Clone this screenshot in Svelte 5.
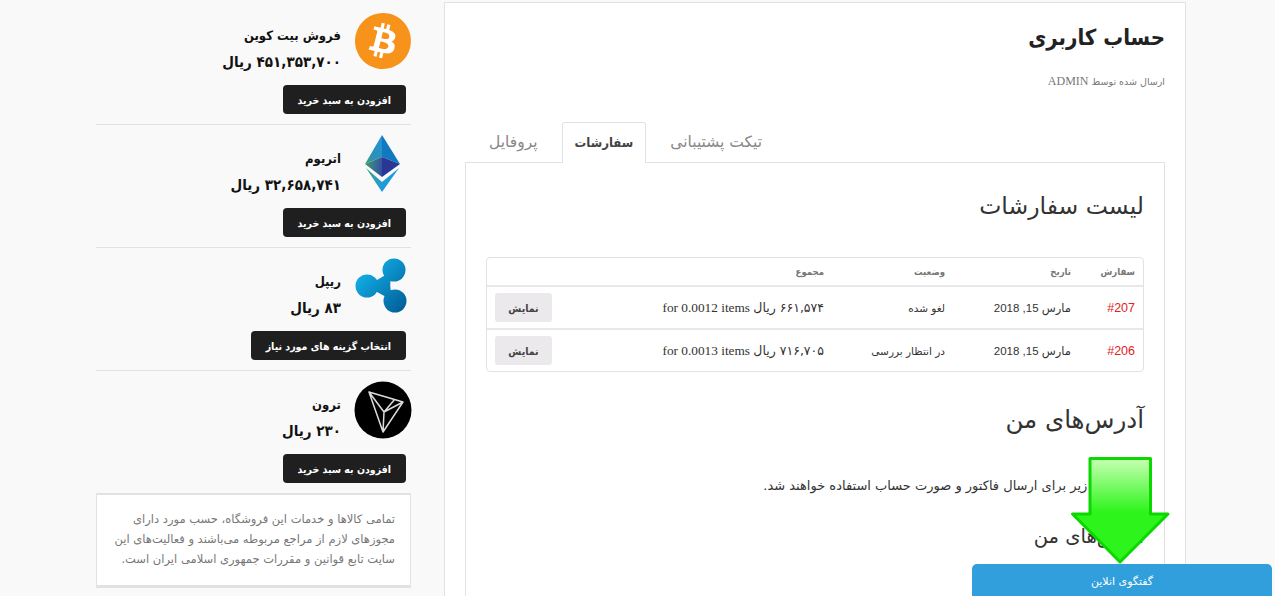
<script>
	const coins = [
		{ id: 'btc', name: 'فروش بیت کوین', price: '۴۵۱,۳۵۳,۷۰۰ ریال', action: 'افزودن به سبد خرید' },
		{ id: 'eth', name: 'اتریوم', price: '۳۲,۶۵۸,۷۴۱ ریال', action: 'افزودن به سبد خرید' },
		{ id: 'xrp', name: 'ریپل', price: '۸۳ ریال', action: 'انتخاب گزینه های مورد نیاز' },
		{ id: 'trx', name: 'ترون', price: '۲۳۰ ریال', action: 'افزودن به سبد خرید' }
	];

	const orders = [
		{ id: '#207', date: 'مارس 15, 2018', status: 'لغو شده', amount: '۶۶۱,۵۷۴ ریال', items: 'for 0.0012 items' },
		{ id: '#206', date: 'مارس 15, 2018', status: 'در انتظار بررسی', amount: '۷۱۶,۷۰۵ ریال', items: 'for 0.0013 items' }
	];
</script>

<div class="page">
	<aside class="sidebar">
		{#each coins as coin}
			<section class="coin">
				<div class="coin-head">
					<svg class="coin-icon" viewBox="0 0 56 56" aria-hidden="true">
						{#if coin.id === 'btc'}
							<circle cx="28" cy="28" r="20" fill="#fff" />
							<g transform="scale(2.3333)">
								<path fill="#f7931a" d="M23.638 14.904c-1.602 6.43-8.113 10.34-14.542 8.736C2.67 22.05-1.244 15.525.362 9.105 1.962 2.67 8.475-1.243 14.9.358c6.43 1.605 10.342 8.115 8.738 14.548v-.002zm-6.35-4.613c.24-1.59-.974-2.45-2.64-3.03l.54-2.153-1.315-.33-.525 2.107c-.345-.087-.705-.167-1.064-.25l.526-2.127-1.32-.33-.54 2.165c-.285-.067-.565-.132-.84-.2l-1.815-.45-.35 1.407s.975.225.955.236c.535.136.63.486.615.766l-1.477 5.92c-.075.166-.24.406-.614.314.015.02-.96-.24-.96-.24l-.66 1.51 1.71.426.93.242-.54 2.19 1.32.327.54-2.17c.36.1.705.19 1.05.273l-.51 2.154 1.32.33.545-2.19c2.24.427 3.93.257 4.64-1.774.57-1.637-.03-2.58-1.217-3.196.854-.193 1.5-.76 1.68-1.93h.01zm-3.01 4.22c-.404 1.64-3.157.75-4.05.53l.72-2.9c.896.23 3.757.67 3.33 2.37zm.41-4.24c-.37 1.49-2.662.735-3.405.55l.654-2.64c.744.18 3.137.524 2.75 2.084v.006z" />
							</g>
						{:else if coin.id === 'eth'}
							<defs>
								<linearGradient id="eth-left" gradientUnits="userSpaceOnUse" x1="27" y1="0" x2="10" y2="28">
									<stop offset="0" stop-color="#1c96d8" />
									<stop offset="0.7" stop-color="#2f8fb8" />
									<stop offset="1" stop-color="#3fa565" />
								</linearGradient>
								<linearGradient id="eth-mid" gradientUnits="userSpaceOnUse" x1="10" y1="28" x2="27" y2="30">
									<stop offset="0" stop-color="#3f9c72" />
									<stop offset="1" stop-color="#3252a0" />
								</linearGradient>
								<linearGradient id="eth-low" gradientUnits="userSpaceOnUse" x1="11" y1="32" x2="27" y2="50">
									<stop offset="0" stop-color="#3fa47c" />
									<stop offset="1" stop-color="#229bd6" />
								</linearGradient>
							</defs>
							<polygon points="27,-1 10,28 27,21" fill="url(#eth-left)" />
							<polygon points="27,-1 45,28 27,21" fill="#1079bf" />
							<polygon points="10,28 27,21 27,41" fill="url(#eth-mid)" />
							<polygon points="45,28 27,21 27,41" fill="#2b3795" />
							<polygon points="11,32 27,46 27,56" fill="url(#eth-low)" />
							<polygon points="44,32 27,46 27,56" fill="#1f9ad8" />
						{:else if coin.id === 'xrp'}
							<defs>
								<linearGradient id="xrp-fill" gradientUnits="userSpaceOnUse" x1="6" y1="8" x2="50" y2="50">
									<stop offset="0" stop-color="#12b2ea" />
									<stop offset="1" stop-color="#015e98" />
								</linearGradient>
							</defs>
							<g fill="url(#xrp-fill)">
								<circle cx="39" cy="11" r="11.500" />
								<circle cx="12" cy="27" r="11.500" />
								<circle cx="40" cy="42" r="11.500" />
								<path d="M39 11Q31 27 40 42Q28 37 12 27Q27 18 39 11Z" />
							</g>
						{:else}
							<circle cx="28" cy="28" r="28.500" fill="#000" />
							<path d="M14 10 48 20 28 50ZM14 10 29 30 28 50M29 30 48 20M29 30 40 17" fill="none" stroke="#dcdcdc" stroke-width="1.500" stroke-linejoin="round" />
						{/if}
					</svg>
					<div class="coin-text">
						<h3>{coin.name}</h3>
						<p>{coin.price}</p>
					</div>
				</div>
				<button class="buy">{coin.action}</button>
			</section>
		{/each}
		<div class="notice">
			تمامی کالاها و خدمات این فروشگاه، حسب مورد دارای مجوزهای لازم از مراجع مربوطه می‌باشند و فعالیت‌های این سایت تابع قوانین و مقررات جمهوری اسلامی ایران است.
		</div>
	</aside>

	<main class="content">
		<h1>حساب کاربری</h1>
		<div class="meta">ارسال شده توسط <span class="serif">ADMIN</span></div>

		<nav class="tabs">
			<span class="tab">تیکت پشتیبانی</span>
			<span class="tab active">سفارشات</span>
			<span class="tab">پروفایل</span>
		</nav>

		<div class="panel">
			<h2>لیست سفارشات</h2>
			<table>
				<colgroup>
					<col class="col-order" />
					<col class="col-date" />
					<col class="col-status" />
					<col />
					<col class="col-action" />
				</colgroup>
				<thead>
					<tr>
						<th>سفارش</th>
						<th>تاریخ</th>
						<th>وضعیت</th>
						<th>مجموع</th>
						<th></th>
					</tr>
				</thead>
				<tbody>
					{#each orders as order}
						<tr>
							<td class="order-id">{order.id}</td>
							<td class="date">{order.date}</td>
							<td>{order.status}</td>
							<td><span class="amount">{order.amount}</span> <span class="serif">{order.items}</span></td>
							<td><button class="view">نمایش</button></td>
						</tr>
					{/each}
				</tbody>
			</table>

			<h2 class="addr-title">آدرس‌های من</h2>
			<p class="addr-note">آدرس‌های زیر برای ارسال فاکتور و صورت حساب استفاده خواهند شد.</p>
			<h3 class="addr-sub">آدرس‌های من</h3>
		</div>
	</main>

	<svg class="arrow" viewBox="0 0 100 108" aria-hidden="true">
		<defs>
			<linearGradient id="arrow-fill" x1="0" y1="0" x2="0" y2="1">
				<stop offset="0" stop-color="#c8ffb4" />
				<stop offset="0.52" stop-color="#2df51b" />
				<stop offset="1" stop-color="#2df51b" />
			</linearGradient>
		</defs>
		<path d="M20 2.500H80.500V58H98L50 106 2.500 58H20Z" fill="url(#arrow-fill)" stroke="#0bd800" stroke-width="3" stroke-linejoin="round" />
	</svg>

	<div class="chat">گفتگوی انلاین</div>
</div>

<style>
	:global(body) {
		background: #f9f9f9;
		overflow: hidden;
	}

	.page {
		--cond: "DejaVu Sans Condensed", "DejaVu Sans", sans-serif;
		display: flex;
		align-items: flex-start;
		gap: 33px;
		height: 596px;
		padding-left: 96px;
		overflow: hidden;
		position: relative;
		font-family: "DejaVu Sans", sans-serif;
		color: #333;
	}

	.sidebar {
		width: 315px;
		flex: none;
		padding-top: 2px;
		direction: rtl;
	}

	.coin {
		height: 123px;
		box-sizing: border-box;
		padding-top: 11px;
		border-bottom: 1px solid #e2e2e2;
	}

	.coin:nth-child(4) {
		border-bottom: 0;
		height: 122px;
	}

	.coin-head {
		display: flex;
		gap: 14px;
		height: 72px;
	}

	.coin-icon {
		width: 56px;
		height: 56px;
		flex: none;
		overflow: visible;
	}

	.coin-text h3,
	.coin-text p {
		font-family: var(--cond);
		font-weight: 700;
		line-height: 18px;
		color: #111;
	}

	.coin-text h3 {
		margin: 14px 0 0;
		font-size: 13px;
	}

	.coin-text p {
		margin: 8px 0 0;
		font-size: 15px;
	}

	.buy {
		display: block;
		height: 29px;
		margin-right: 5px;
		padding: 0 15px;
		border: 0;
		border-radius: 4px;
		background: #1f1f1f;
		color: #fff;
		font-family: var(--cond);
		font-size: 10.500px;
		font-weight: 700;
	}

	.notice {
		box-sizing: border-box;
		height: 95px;
		padding: 14px 15px 0;
		background: #fff;
		border: 1px solid #e2e2e2;
		border-top-width: 2px;
		border-bottom-width: 3px;
		font-size: 11.500px;
		line-height: 20px;
		color: #777;
	}

	.content {
		box-sizing: border-box;
		width: 742px;
		height: 700px;
		margin-top: 2px;
		flex: none;
		padding: 0 20px;
		background: #fff;
		border: 1px solid #e2e2e2;
		direction: rtl;
	}

	h1 {
		margin: 20px 0 0;
		font-family: var(--cond);
		font-size: 22px;
		line-height: 30px;
		font-weight: 700;
		color: #222;
	}

	.meta {
		margin-top: 21px;
		font-size: 9.500px;
		line-height: 14px;
		color: #777;
	}

	.serif {
		font-family: "Liberation Serif", serif;
	}

	.meta .serif {
		font-size: 12px;
	}

	.tabs {
		display: flex;
		justify-content: flex-end;
		height: 41px;
		margin-top: 33px;
	}

	.tab {
		box-sizing: border-box;
		height: 41px;
		padding: 0 24px;
		font-size: 15.500px;
		line-height: 40px;
		color: #888;
	}

	.tab.active {
		position: relative;
		z-index: 1;
		padding: 0 12px;
		background: #fff;
		border: 1px solid #e2e2e2;
		border-bottom: 0;
		border-radius: 3px 3px 0 0;
		color: #444;
		font-family: var(--cond);
		font-weight: 700;
		font-size: 13px;
	}

	.panel {
		margin-top: -1px;
		padding: 0 20px;
		height: 500px;
		border: 1px solid #e2e2e2;
	}

	h2 {
		margin: 27px 0 0;
		font-size: 23.500px;
		line-height: 32px;
		font-weight: 400;
		color: #333;
	}

	table {
		width: 658px;
		margin-top: 35px;
		border: 1px solid #e2e2e2;
		border-radius: 4px;
		border-spacing: 0;
		table-layout: fixed;
		font-size: 10.500px;
	}

	.col-order {
		width: 64px;
	}

	.col-date {
		width: 126px;
	}

	.col-status {
		width: 121px;
	}

	.col-action {
		width: 73px;
	}

	th {
		height: 27px;
		padding: 0 8px;
		text-align: right;
		font-family: var(--cond);
		font-size: 9.500px;
		font-weight: 700;
		color: #777;
		border-bottom: 2px solid #e8e8e8;
	}

	td {
		height: 41px;
		padding: 0 8px;
		text-align: right;
		color: #333;
		border-bottom: 2px solid #e8e8e8;
	}

	tbody tr:last-child td {
		border-bottom: 0;
	}

	.order-id {
		font-family: "Liberation Sans", sans-serif;
		font-size: 12.500px;
		color: #e2231a;
	}

	.date {
		font-family: "Liberation Sans", "DejaVu Sans", sans-serif;
		font-size: 11.500px;
	}

	.amount {
		font-size: 12.500px;
	}

	td .serif {
		font-size: 13.300px;
	}

	.view {
		display: block;
		width: 57px;
		height: 29px;
		border: 0;
		border-radius: 3px;
		background: #ebe9eb;
		color: #444;
		font-family: var(--cond);
		font-size: 10.500px;
		font-weight: 700;
	}

	.addr-title {
		margin-top: 32px;
		font-size: 24.500px;
	}

	.addr-note {
		margin: 41px 0 0;
		font-size: 13px;
		line-height: 18px;
		color: #333;
	}

	.addr-sub {
		margin: 28px 0 0;
		font-size: 19.500px;
		font-weight: 400;
		line-height: 28px;
		color: #333;
	}

	.arrow {
		position: absolute;
		left: 1070px;
		top: 456px;
		width: 100px;
		height: 108px;
		z-index: 3;
	}

	.chat {
		position: absolute;
		left: 972px;
		bottom: 0;
		width: 300px;
		height: 32px;
		z-index: 4;
		direction: rtl;
		text-align: center;
		background: #319fdc;
		border-radius: 5px 5px 0 0;
		color: #fff;
		font-size: 11px;
		line-height: 35px;
	}
</style>
